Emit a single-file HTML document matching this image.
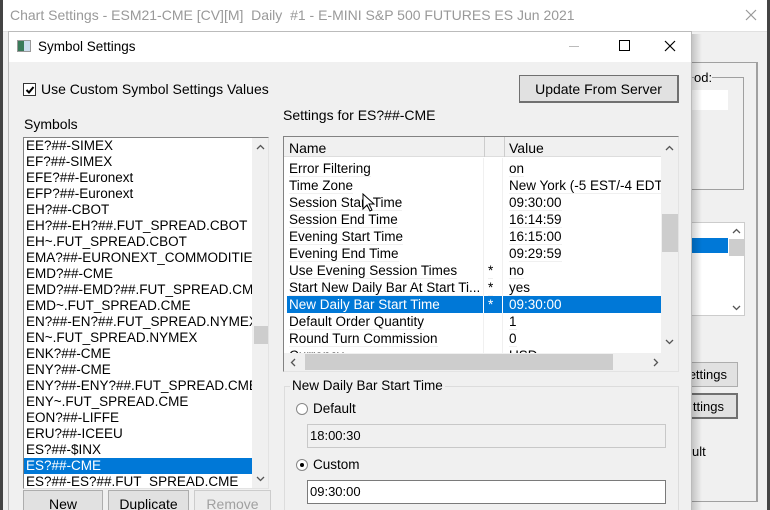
<!DOCTYPE html>
<html><head><style>
*{box-sizing:border-box;margin:0;padding:0}
html,body{width:770px;height:510px;overflow:hidden}
body{background:#f0f0f0;font-family:"Liberation Sans",Arial,sans-serif;font-size:13px;color:#000;position:relative}
.a{position:absolute}
.btn{position:absolute;background:#e1e1e1;border:1px solid #adadad;text-align:center;font-size:14px}
.sunk{position:absolute;border:1px solid #828282;border-right-color:#e3e3e3;border-bottom-color:#e3e3e3;background:#fff}
.row{position:absolute;left:0;height:16px;line-height:16px;font-size:13.5px;white-space:nowrap}
.gr{position:absolute;height:17px;line-height:17px;font-size:13.5px;white-space:nowrap;border-bottom:1px solid #f0f0f0}
</style></head><body>
<div class="a" style="left:0;top:0;width:770px;height:32px;background:#fff;border-bottom:1px solid #e0e0e0"></div>
<div class="a" style="left:0;top:0;width:3px;height:510px;background:#444"></div>
<div class="a" style="left:767px;top:0;width:3px;height:510px;background:#444"></div>
<div class="a" style="left:10px;top:7px;font-size:14px;color:#999;white-space:nowrap">Chart Settings - ESM21-CME [CV][M]&nbsp; Daily&nbsp; #1 - E-MINI S&amp;P 500 FUTURES ES Jun 2021</div>
<svg class="a" style="left:745px;top:9px" width="12" height="12"><path d="M1 1L11 11M11 1L1 11" stroke="#999" stroke-width="1.2"/></svg>
<!-- right background -->
<div class="a" style="left:690px;top:62px;width:68px;height:440px;border:1px solid #a0a0a0;border-left:none;border-right:2px solid #a0a0a0"></div>
<div class="a" style="left:690px;top:77px;width:54px;height:113px;border:1px solid #a0a0a0;border-left:none"></div>
<div class="a" style="left:694px;top:70px;font-size:13px;background:#f0f0f0">od:</div>
<div class="a" style="left:690px;top:90px;width:38px;height:20px;background:#fff"></div>
<div class="a" style="left:690px;top:222px;width:55px;height:94px;background:#fff;border:1px solid #ccc"></div>
<div class="a" style="left:690px;top:238px;width:38px;height:15px;background:#0078d7"></div>
<div class="a" style="left:729px;top:239px;width:15px;height:17px;background:#cdcdcd"></div>
<svg class="a" style="left:732px;top:228px" width="9" height="6"><path d="M1 5L4.5 1.5L8 5" stroke="#555" fill="none" stroke-width="1.3"/></svg>
<svg class="a" style="left:732px;top:305px" width="9" height="6"><path d="M1 1L4.5 4.5L8 1" stroke="#555" fill="none" stroke-width="1.3"/></svg>
<div class="btn" style="left:680px;top:362px;width:58px;height:25px;line-height:23px;text-align:right;padding-right:10px;font-size:13px">ettings</div>
<div class="btn" style="left:680px;top:393px;width:58px;height:26px;line-height:24px;text-align:right;padding-right:12px;font-size:13px;border:2px solid #707070">ttings</div>
<div class="a" style="left:692px;top:444px;font-size:13px">ult</div>
<div class="a" style="left:692px;top:34px;width:10px;height:476px;background:linear-gradient(90deg,rgba(0,0,0,.18),rgba(0,0,0,0))"></div>
<!-- dialog -->
<div class="a" style="left:8px;top:31px;width:684px;height:479px;background:#f0f0f0;border:1px solid #bbb;border-bottom:none"></div>
<div class="a" style="left:9px;top:32px;width:682px;height:30px;background:#fff"></div>
<div class="a" style="left:17px;top:40px;width:14px;height:12px;border:1px solid #999;background:linear-gradient(90deg,#3a7a5a 50%,#cde 50%)"></div>
<div class="a" style="left:38px;top:39px;font-size:13.5px">Symbol Settings</div>
<div class="a" style="left:569px;top:46px;width:10px;height:1px;background:#bbb"></div>
<div class="a" style="left:619px;top:40px;width:11px;height:11px;border:1px solid #000"></div>
<svg class="a" style="left:664px;top:40px" width="12" height="12"><path d="M1 1L11 11M11 1L1 11" stroke="#000" stroke-width="1.2"/></svg>
<div class="a" style="left:23px;top:83px;width:13px;height:13px;border:1px solid #333;background:#fff"></div>
<svg class="a" style="left:25px;top:85px" width="10" height="10"><path d="M1.5 5L4 7.5L8.5 2" stroke="#000" fill="none" stroke-width="2"/></svg>
<div class="a" style="left:41px;top:81px;font-size:14px">Use Custom Symbol Settings Values</div>
<div class="btn" style="left:519px;top:75px;width:160px;height:28px;line-height:26px;border-color:#707070;border-width:1px 2px 2px 1px">Update From Server</div>
<div class="a" style="left:24px;top:116px;font-size:14px">Symbols</div>
<div class="a" style="left:283px;top:107px;font-size:14px">Settings for ES?##-CME</div>
<!-- symbols list -->
<div class="sunk" style="left:23px;top:137px;width:246px;height:352px;overflow:hidden">
 <div class="a" style="left:2px;top:0;width:226px">
  <div class="row" style="top:0">EE?##-SIMEX</div>
  <div class="row" style="top:16px">EF?##-SIMEX</div>
  <div class="row" style="top:32px">EFE?##-Euronext</div>
  <div class="row" style="top:48px">EFP?##-Euronext</div>
  <div class="row" style="top:64px">EH?##-CBOT</div>
  <div class="row" style="top:80px">EH?##-EH?##.FUT_SPREAD.CBOT</div>
  <div class="row" style="top:96px">EH~.FUT_SPREAD.CBOT</div>
  <div class="row" style="top:112px">EMA?##-EURONEXT_COMMODITIES</div>
  <div class="row" style="top:128px">EMD?##-CME</div>
  <div class="row" style="top:144px">EMD?##-EMD?##.FUT_SPREAD.CME</div>
  <div class="row" style="top:160px">EMD~.FUT_SPREAD.CME</div>
  <div class="row" style="top:176px">EN?##-EN?##.FUT_SPREAD.NYMEX</div>
  <div class="row" style="top:192px">EN~.FUT_SPREAD.NYMEX</div>
  <div class="row" style="top:208px">ENK?##-CME</div>
  <div class="row" style="top:224px">ENY?##-CME</div>
  <div class="row" style="top:240px">ENY?##-ENY?##.FUT_SPREAD.CME</div>
  <div class="row" style="top:256px">ENY~.FUT_SPREAD.CME</div>
  <div class="row" style="top:272px">EON?##-LIFFE</div>
  <div class="row" style="top:288px">ERU?##-ICEEU</div>
  <div class="row" style="top:304px">ES?##-$INX</div>
  <div class="row" style="top:320px;background:#0078d7;color:#fff;width:228px;left:-2px;padding-left:2px">ES?##-CME</div>
  <div class="row" style="top:336px">ES?##-ES?##.FUT_SPREAD.CME</div>
 </div>
 <div class="a" style="left:228px;top:0;width:17px;height:350px;background:#f0f0f0"></div>
 <div class="a" style="left:230px;top:188px;width:15px;height:18px;background:#cdcdcd"></div>
 <svg class="a" style="left:232px;top:6px" width="9" height="6"><path d="M1 5L4.5 1.5L8 5" stroke="#555" fill="none" stroke-width="1.3"/></svg>
 <svg class="a" style="left:232px;top:338px" width="9" height="6"><path d="M1 1L4.5 4.5L8 1" stroke="#555" fill="none" stroke-width="1.3"/></svg>
</div>
<div class="btn" style="left:23px;top:490px;width:80px;height:22px;line-height:26px">New</div>
<div class="btn" style="left:108px;top:490px;width:81px;height:22px;line-height:26px">Duplicate</div>
<div class="btn" style="left:194px;top:490px;width:77px;height:22px;line-height:26px;color:#a0a0a0;background:#ececec;border-color:#ccc">Remove</div>
<!-- grid -->
<div class="sunk" style="left:283px;top:136px;width:396px;height:236px;overflow:hidden">
 <div class="a" style="left:0;top:0;width:377px;height:20px;background:#f0f0f0;border-bottom:1px solid #ddd"></div>
 <div class="a" style="left:5px;top:3px;font-size:14px">Name</div>
 <div class="a" style="left:200px;top:0;width:1px;height:20px;background:#ccc"></div>
 <div class="a" style="left:220px;top:0;width:1px;height:20px;background:#ccc"></div>
 <div class="a" style="left:225px;top:3px;font-size:14px">Value</div>
 <div class="a" style="left:199px;top:21px;width:1px;height:200px;background:#f0f0f0"></div>
 <div class="a" style="left:218px;top:21px;width:1px;height:200px;background:#f0f0f0"></div>
 <div class="a" style="left:0;top:23px;width:377px">
  <div class="gr" style="top:0;left:5px">Error Filtering</div><div class="gr" style="top:0;left:225px">on</div>
  <div class="gr" style="top:17px;left:5px">Time Zone</div><div class="gr" style="top:17px;left:225px">New York (-5 EST/-4 EDT</div>
  <div class="gr" style="top:34px;left:5px">Session Start Time</div><div class="gr" style="top:34px;left:225px">09:30:00</div>
  <div class="gr" style="top:51px;left:5px">Session End Time</div><div class="gr" style="top:51px;left:225px">16:14:59</div>
  <div class="gr" style="top:68px;left:5px">Evening Start Time</div><div class="gr" style="top:68px;left:225px">16:15:00</div>
  <div class="gr" style="top:85px;left:5px">Evening End Time</div><div class="gr" style="top:85px;left:225px">09:29:59</div>
  <div class="gr" style="top:102px;left:5px">Use Evening Session Times</div><div class="gr" style="top:102px;left:204px">*</div><div class="gr" style="top:102px;left:225px">no</div>
  <div class="gr" style="top:119px;left:5px">Start New Daily Bar At Start Ti...</div><div class="gr" style="top:119px;left:204px">*</div><div class="gr" style="top:119px;left:225px">yes</div>
  <div class="a" style="top:136px;left:3px;width:374px;height:17px;background:#0078d7"></div>
  <div class="a" style="top:136px;left:199px;width:1px;height:17px;background:#fff"></div>
  <div class="a" style="top:136px;left:218px;width:1px;height:17px;background:#fff"></div>
  <div class="gr" style="top:136px;left:5px;color:#fff;border:none">New Daily Bar Start Time</div><div class="gr" style="top:136px;left:204px;color:#fff;border:none">*</div><div class="gr" style="top:136px;left:225px;color:#fff;border:none">09:30:00</div>
  <div class="gr" style="top:153px;left:5px">Default Order Quantity</div><div class="gr" style="top:153px;left:225px">1</div>
  <div class="gr" style="top:170px;left:5px">Round Turn Commission</div><div class="gr" style="top:170px;left:225px">0</div>
  <div class="gr" style="top:187px;left:5px">Currency</div><div class="gr" style="top:187px;left:225px">USD</div>
 </div>
 <div class="a" style="left:377px;top:0;width:17px;height:216px;background:#f0f0f0"></div>
 <div class="a" style="left:378px;top:77px;width:16px;height:38px;background:#cdcdcd"></div>
 <svg class="a" style="left:381px;top:8px" width="9" height="6"><path d="M1 5L4.5 1.5L8 5" stroke="#555" fill="none" stroke-width="1.3"/></svg>
 <svg class="a" style="left:381px;top:202px" width="9" height="6"><path d="M1 1L4.5 4.5L8 1" stroke="#555" fill="none" stroke-width="1.3"/></svg>
 <div class="a" style="left:0;top:216px;width:394px;height:18px;background:#f0f0f0"></div>
 <div class="a" style="left:21px;top:217px;width:308px;height:16px;background:#cdcdcd"></div>
 <svg class="a" style="left:6px;top:221px" width="6" height="9"><path d="M5 1L1.5 4.5L5 8" stroke="#555" fill="none" stroke-width="1.3"/></svg>
 <svg class="a" style="left:369px;top:221px" width="6" height="9"><path d="M1 1L4.5 4.5L1 8" stroke="#555" fill="none" stroke-width="1.3"/></svg>
</div>
<!-- group -->
<div class="a" style="left:284px;top:386px;width:395px;height:130px;border:1px solid #dcdcdc"></div>
<div class="a" style="left:290px;top:378px;font-size:13.5px;background:#f0f0f0;padding:0 2px">New Daily Bar Start Time</div>
<div class="a" style="left:296px;top:403px;width:12px;height:12px;border-radius:50%;border:1px solid #888;background:#fff"></div>
<div class="a" style="left:313px;top:401px;font-size:13.5px">Default</div>
<div class="a" style="left:307px;top:424px;width:359px;height:24px;border:1px solid #c8c8c8;background:#f0f0f0;line-height:22px;padding-left:2px;font-size:13px">18:00:30</div>
<div class="a" style="left:296px;top:459px;width:12px;height:12px;border-radius:50%;border:1px solid #888;background:#fff"></div>
<div class="a" style="left:300px;top:463px;width:4px;height:4px;border-radius:50%;background:#000"></div>
<div class="a" style="left:313px;top:457px;font-size:13.5px">Custom</div>
<div class="a" style="left:307px;top:480px;width:359px;height:24px;border:1px solid #7a7a7a;background:#fff;line-height:22px;padding-left:2px;font-size:13px">09:30:00</div>
<svg class="a" style="left:362px;top:193px" width="14" height="20" viewBox="0 0 14 20"><path d="M1 1 L1 16 L5 12 L8 18 L10 17 L7 11 L12 11 Z" fill="#fff" stroke="#000" stroke-width="1"/></svg>
</body></html>
